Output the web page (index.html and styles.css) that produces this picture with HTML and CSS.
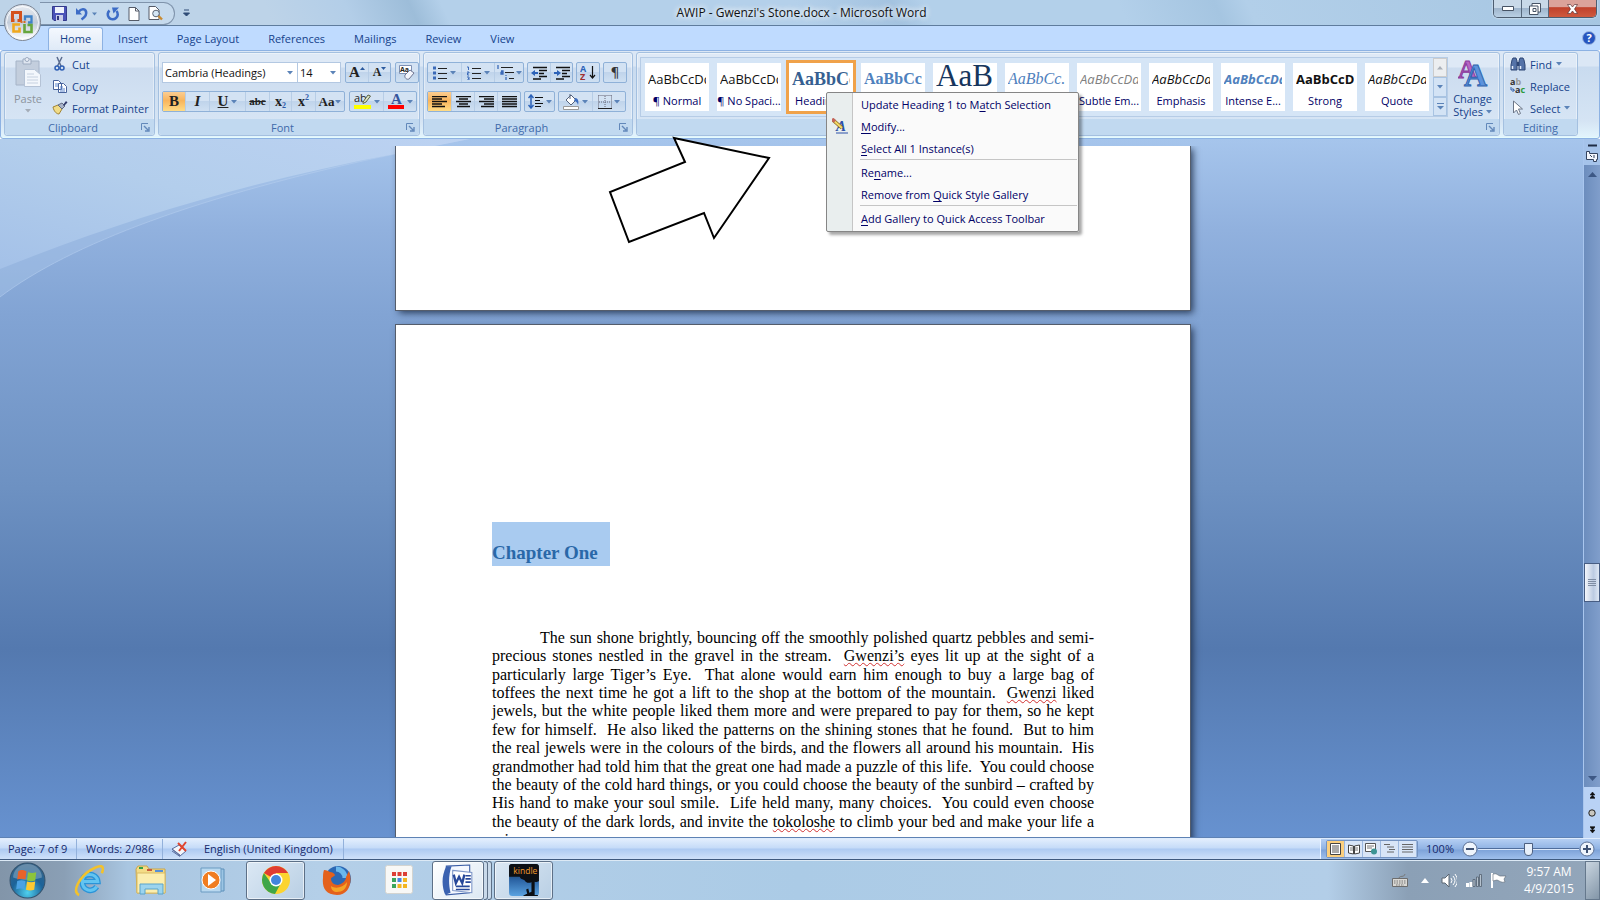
FILE: index.html
```html
<!DOCTYPE html>
<html lang="en">
<head>
<meta charset="utf-8">
<title>AWIP - Gwenzi's Stone.docx - Microsoft Word</title>
<link rel="stylesheet" href="styles.css">
</head>
<body>
<svg class="defs" aria-hidden="true">
  <defs>
    <symbol id="down" viewBox="0 0 6 4"><path d="M0 0h6L3 3.5z" fill="#5b83b8"/></symbol>
    <symbol id="launch" viewBox="0 0 9 9"><path d="M.5 7V.5H7" fill="none" stroke="#6288ba"/><path d="M3 3l4 4M8 4v4H4" fill="none" stroke="#6288ba" stroke-width="1.4"/></symbol>
    <linearGradient id="orb" x1="0" y1="0" x2="0" y2="1"><stop offset="0" stop-color="#e9edf3"/><stop offset=".5" stop-color="#c3ccda"/><stop offset="1" stop-color="#fff"/></linearGradient>
    <radialGradient id="startorb" cx=".5" cy=".85" r=".9"><stop offset="0" stop-color="#4fd0ee"/><stop offset=".5" stop-color="#1c6399"/><stop offset="1" stop-color="#3c6688"/></radialGradient>
    <linearGradient id="kindlebg" x1="0" y1="0" x2="0" y2="1"><stop offset="0" stop-color="#0b1c30"/><stop offset=".5" stop-color="#2b63a4"/><stop offset="1" stop-color="#5aa2e0"/></linearGradient>
  </defs>
</svg>
<div class="window">
  <header class="titlebar">
    <div class="quick">
      <button aria-label="Save"><svg width="15" height="15" viewBox="0 0 15 15"><path d="M.5.5h14v14H2L.5 13z" fill="#4a52b8" stroke="#343a8c"/><path d="M3 1h9v6H3z" fill="#eef2fc"/><path d="M4 9h7v6H4z" fill="#c9cde8"/><path d="M5 10h2v4H5z" fill="#30367c"/></svg></button>
      <button class="undo" aria-label="Undo"><svg width="23" height="14" viewBox="0 0 23 14"><path d="M1 1v6.500h6z" fill="#3d6cc6"/><path d="M3.500 5C6 1.500 10 1.500 11 4.500S9.500 10.500 6.500 12.500" fill="none" stroke="#3d6cc6" stroke-width="2.600"/><path d="M17 5.500h5l-2.500 3z" fill="#5b83b8"/></svg></button>
      <button aria-label="Repeat"><svg width="14" height="14" viewBox="0 0 14 14"><path d="M3.500 3.500A5 5 0 1 0 10.500 4" fill="none" stroke="#3d6cc6" stroke-width="2.600"/><path d="M6 .5h7L7.500 6.500z" fill="#3d6cc6"/></svg></button>
      <button aria-label="New"><svg width="12" height="14" viewBox="0 0 12 14"><path d="M1 .5h6.500l3.500 3.500v9.500H1z" fill="#fff" stroke="#555b68"/><path d="M7.500.5V4H11" fill="none" stroke="#555b68"/></svg></button>
      <button aria-label="Print preview"><svg width="15" height="15" viewBox="0 0 15 15"><path d="M1 .5h6.500l3.500 3.500v9.500H1z" fill="#fff" stroke="#555b68"/><circle cx="8" cy="7.500" r="3.300" fill="#d4e6f5" stroke="#5b6675"/><path d="M10.500 10l3.500 3.500" stroke="#c98b32" stroke-width="2.400"/></svg></button>
    </div>
    <button class="customize" aria-label="Customize Quick Access Toolbar"><svg width="7" height="8" viewBox="0 0 7 8"><path d="M1 1h5M.5 4h6l-3 3z" stroke="#2e4b76" stroke-width="1" fill="#2e4b76"/></svg></button>
    <h1 class="title">AWIP - Gwenzi's Stone.docx - Microsoft Word</h1>
    <div class="controls">
      <button class="min" aria-label="Minimize"><svg width="12" height="5"><path d="M.5.500h11v4H.5z" fill="#fff" stroke="#475364"/></svg></button>
      <button class="max" aria-label="Restore"><svg width="12" height="12" viewBox="0 0 12 12"><path d="M3 .5h8.500V9H9v2.500H.5V3H3z" fill="#fff" stroke="#475364"/><path d="M4 5.500h3v3H4zM3 3h6v6" fill="none" stroke="#475364"/></svg></button>
      <button class="close" aria-label="Close"><svg width="11" height="10" viewBox="0 0 11 10"><path d="M.5.5h3l2 2.500 2-2.500h3L7.500 5l3 4.500h-3l-2-2.500-2 2.500h-3l3-4.500z" fill="#fff" stroke="#5c3438" stroke-width=".7"/></svg></button>
    </div>
    <button class="office" aria-label="Office Button"><svg width="37" height="37" viewBox="0 0 37 37"><circle cx="18.500" cy="18.500" r="18" fill="url(#orb)" stroke="#7a8493"/><circle cx="18.500" cy="18.500" r="16" fill="none" stroke="#fff" stroke-opacity=".8"/><g fill="none" stroke-width="3"><path d="M10.500 16.500H8.500v-8h8v8h-3" stroke="#d4511c"/><path d="M21 16.500v-4h6.500v6H24" stroke="#3f82c8" stroke-width="2.300"/><path d="M16 20.500H9.500v7h6v-4" stroke="#f0a81e" stroke-width="2.600"/><path d="M20.500 20v8h7v-7h-4" stroke="#67a63e" stroke-width="2.600"/></g><path d="M16.500 17h2v2h-2zM19.500 17h2v2h-2z" fill="#d86a25"/></svg></button>
  </header>

  <nav class="tabs" role="tablist">
    <button class="tab on" role="tab" aria-selected="true">Home</button>
    <button class="tab" role="tab">Insert</button>
    <button class="tab" role="tab">Page Layout</button>
    <button class="tab" role="tab">References</button>
    <button class="tab" role="tab">Mailings</button>
    <button class="tab" role="tab">Review</button>
    <button class="tab" role="tab">View</button>
    <button class="help" aria-label="Help">?</button>
  </nav>

  <div class="ribbon">
    <section class="group clipboard">
      <div class="body">
        <button class="big paste" disabled><svg width="27" height="30" viewBox="0 0 27 30"><path d="M1 4h23v24H1z" fill="#c3cedd" stroke="#a6b4c8"/><path d="M8 2h8v5H8z" fill="#dfe6f0" stroke="#9dabc0"/><circle cx="12" cy="2.500" r="2" fill="#e9eef6" stroke="#9dabc0"/><path d="M9.500 12.500h10l6 5v12h-16z" fill="#f3f7fc" stroke="#b5c3d6"/><path d="M12 17h7M12 20h11M12 23h11M12 26h11" stroke="#c6d1e0"/></svg><span>Paste</span><svg width="6" height="4"><path d="M0 0h6L3 3.500z" fill="#a5adb8"/></svg></button>
        <div class="stack">
          <button><svg width="16" height="16" viewBox="0 0 16 16"><path d="M5 1l4 9M10 1L5.500 10" stroke="#5a6c90" stroke-width="1.500" fill="none"/><circle cx="5" cy="12" r="2" fill="none" stroke="#2e5fb4" stroke-width="1.500"/><circle cx="10" cy="12" r="2" fill="none" stroke="#2e5fb4" stroke-width="1.500"/></svg><span>Cut</span></button>
          <button><svg width="16" height="16" viewBox="0 0 16 16"><path d="M1.500 2.500h5l3 3v6h-8zM6.500 5.500h5l3 3v6h-8z" fill="#fff" stroke="#47639c"/><path d="M3 6h3M3 8h3M8 9h3M8 11h5M8 13h5" stroke="#5d86cd"/></svg><span>Copy</span></button>
          <button><svg width="16" height="16" viewBox="0 0 16 16"><path d="M1 7l5-2 4 4-3 5c-2 0-5-2-6-7z" fill="#f1dc87" stroke="#a18434"/><path d="M6 5l4-2 3 3-3 3z" fill="#a9b4c9" stroke="#616b84"/><path d="M11 5l3-4 1.500 1.500L12 6z" fill="#303a6a"/></svg><span>Format Painter</span></button>
        </div>
      </div>
      <footer><h2>Clipboard</h2><button aria-label="Clipboard options"><svg width="9" height="9"><use href="#launch"/></svg></button></footer>
    </section>

    <section class="group font">
      <div class="body rows">
        <div class="row">
          <div class="combos">
            <span class="combo face"><select aria-label="Font"><option>Cambria (Headings)</option></select><svg width="6" height="4"><use href="#down"/></svg></span>
            <span class="combo size"><select aria-label="Font size"><option>14</option></select><svg width="6" height="4"><use href="#down"/></svg></span>
          </div>
          <div class="set">
            <button class="w22 serif grow" aria-label="Grow font">A<svg width="5" height="3"><path d="M0 3h5L2.500 0z" fill="#2c5a9e"/></svg></button>
            <button class="w22 serif shrink" aria-label="Shrink font">A<svg width="5" height="3"><path d="M0 0h5L2.500 3z" fill="#2c5a9e"/></svg></button>
          </div>
          <div class="set"><button class="w22" aria-label="Clear formatting"><svg width="18" height="17" viewBox="0 0 18 17"><path d="M1.500 1.500h12v8h-12z" fill="#fff" stroke="#7e90b4"/><text x="2" y="8" class="tiny">Aa</text><path d="M7 11l5-5 4 3-5 6c-2 1-5-1-4-4z" fill="#f3f5fc" stroke="#6f7692"/></svg></button></div>
        </div>
        <div class="row">
          <div class="set">
            <button class="w22 serif on" aria-label="Bold"><b>B</b></button>
            <button class="w24 serif" aria-label="Italic"><i>I</i></button>
            <button class="w36 serif" aria-label="Underline"><u>U</u><svg width="6" height="4"><use href="#down"/></svg></button>
            <button class="w24 serif strike" aria-label="Strikethrough"><s>abc</s></button>
            <button class="w22 serif script" aria-label="Subscript">x<sub>2</sub></button>
            <button class="w24 serif script" aria-label="Superscript">x<sup>2</sup></button>
            <button class="w29 serif case" aria-label="Change case">Aa<svg width="6" height="4"><use href="#down"/></svg></button>
          </div>
          <div class="set">
            <button class="w33" aria-label="Highlight"><svg width="18" height="17" viewBox="0 0 18 17"><text x="0" y="9" class="abc">ab</text><path d="M9 9l5-7 2.500 1-4.500 6-3 1.500z" fill="#dce5c5" stroke="#5a6245"/><path d="M0 12h17v4H0z" fill="#ff0"/></svg><svg width="6" height="4"><use href="#down"/></svg></button>
            <button class="w33" aria-label="Font color"><svg width="17" height="17" viewBox="0 0 17 17"><text x="3" y="11" class="colorA">A</text><path d="M0 12h16v4H0z" fill="#f00"/></svg><svg width="6" height="4"><use href="#down"/></svg></button>
          </div>
        </div>
      </div>
      <footer><h2>Font</h2><button aria-label="Font options"><svg width="9" height="9"><use href="#launch"/></svg></button></footer>
    </section>

    <section class="group paragraph">
      <div class="body rows">
        <div class="row">
          <div class="set">
            <button class="w34" aria-label="Bullets"><svg width="14" height="14"><path d="M0 2h3M0 7h3M0 12h3" stroke="#3b6ab8" stroke-width="3"/><path d="M5 2.500h9M5 7.500h9M5 12.500h9" stroke="#222"/></svg><svg width="6" height="4"><use href="#down"/></svg></button>
            <button class="w34" aria-label="Numbering"><svg width="14" height="14"><path d="M0 1h1.500v3M0 6h2v1H.5v2H2M0 11h2v3H0M1 12.500h1" stroke="#3b6ab8" fill="none"/><path d="M5 2.500h9M5 7.500h9M5 12.500h9" stroke="#222"/></svg><svg width="6" height="4"><use href="#down"/></svg></button>
            <button class="w29" aria-label="Multilevel list"><svg width="17" height="15"><path d="M1 0v4M4 6h2v3H4V7.500h2M9 10v1M9 12v3" stroke="#3b6ab8" fill="none" stroke-width="1.300"/><path d="M4 2.500h12M8 7.500h9M12 13.500h5" stroke="#222"/></svg><svg width="6" height="4"><use href="#down"/></svg></button>
          </div>
          <div class="set">
            <button class="w22" aria-label="Decrease indent"><svg width="16" height="14"><path d="M2 1.500h14M8 4.500h8M8 7.500h5M8 10.500h8M2 13h8" stroke="#111" stroke-width="1.600"/><path d="M0 7l4-3v2h3v2H4v2z" fill="#2c62b8"/></svg></button>
            <button class="w22" aria-label="Increase indent"><svg width="16" height="14"><path d="M2 1.500h14M8 4.500h8M8 7.500h5M8 10.500h8M2 13h8" stroke="#111" stroke-width="1.600"/><path d="M7 7L3 4v2H0v2h3v2z" fill="#2c62b8"/></svg></button>
          </div>
          <div class="set"><button class="w22" aria-label="Sort"><svg width="17" height="17" viewBox="0 0 17 17"><text x="0" y="8" class="sortA">A</text><text x="0" y="16" class="sortZ">Z</text><path d="M12.500 2v12M10 11l2.500 3 2.500-3" fill="none" stroke="#111" stroke-width="1.200"/></svg></button></div>
          <div class="set"><button class="w22 pilcrow" aria-label="Show marks">¶</button></div>
        </div>
        <div class="row">
          <div class="set">
            <button class="w23 on" aria-label="Align left"><svg width="15" height="12"><path d="M0 .5h15M0 3h10M0 5.500h15M0 8h10M0 10.500h13" stroke="#111" stroke-width="1.300"/></svg></button>
            <button class="w23" aria-label="Center"><svg width="15" height="12"><path d="M0 .5h15M3 3h9M0 5.500h15M3 8h9M1 10.500h13" stroke="#111" stroke-width="1.300"/></svg></button>
            <button class="w23" aria-label="Align right"><svg width="15" height="12"><path d="M0 .5h15M5 3h10M0 5.500h15M5 8h10M2 10.500h13" stroke="#111" stroke-width="1.300"/></svg></button>
            <button class="w23" aria-label="Justify"><svg width="15" height="12"><path d="M0 .5h15M0 3h15M0 5.500h15M0 8h15M0 10.500h15" stroke="#111" stroke-width="1.300"/></svg></button>
          </div>
          <div class="set"><button class="w29" aria-label="Line spacing"><svg width="16" height="15"><path d="M3 1v13M.5 4L3 1l2.500 3M.5 11L3 14l2.500-3" fill="none" stroke="#2c62b8" stroke-width="1.500"/><path d="M7 3.500h8M7 6.500h5M7 9.500h8M7 12.500h6" stroke="#111" stroke-width="1.200"/></svg><svg width="6" height="4"><use href="#down"/></svg></button></div>
          <div class="set">
            <button class="w33" aria-label="Shading"><svg width="17" height="16"><path d="M3 6l5-5 5 5-5 5z" fill="#fff" stroke="#54627c"/><path d="M7 0v5" stroke="#54627c"/><path d="M12 4c3 0 4 3 3 7-1-3-2-4-4-4z" fill="#3a6cc0"/><path d="M.5 12.500h15v3H.5z" fill="#fff" stroke="#999"/></svg><svg width="6" height="4"><use href="#down"/></svg></button>
            <button class="w33" aria-label="Borders"><svg width="14" height="14"><path d="M.5.5v13M13.500.5v13M.5.5h13M7 1v12M1 7h12" fill="none" stroke="#667" stroke-dasharray="1 1"/><path d="M0 13.500h14" stroke="#222"/></svg><svg width="6" height="4"><use href="#down"/></svg></button>
          </div>
        </div>
      </div>
      <footer><h2>Paragraph</h2><button aria-label="Paragraph options"><svg width="9" height="9"><use href="#launch"/></svg></button></footer>
    </section>

    <section class="group styles">
      <div class="body">
        <div class="gallery">
          <div class="cards">
            <button class="card"><span class="demo">AaBbCcDd</span><span class="name">¶ Normal</span></button>
            <button class="card"><span class="demo">AaBbCcDd</span><span class="name">¶ No Spaci...</span></button>
            <button class="card picked"><span class="demo h1s">AaBbCc</span><span class="name">Heading 1</span></button>
            <button class="card"><span class="demo h2s">AaBbCc</span><span class="name">Heading 2</span></button>
            <button class="card"><span class="demo titles">AaB</span><span class="name">Title</span></button>
            <button class="card"><span class="demo subs">AaBbCc.</span><span class="name">Subtitle</span></button>
            <button class="card"><span class="demo subtle">AaBbCcDd</span><span class="name">Subtle Em...</span></button>
            <button class="card"><span class="demo em">AaBbCcDd</span><span class="name">Emphasis</span></button>
            <button class="card"><span class="demo intense">AaBbCcDd</span><span class="name">Intense E...</span></button>
            <button class="card"><span class="demo strong">AaBbCcDd</span><span class="name">Strong</span></button>
            <button class="card"><span class="demo em">AaBbCcDd</span><span class="name">Quote</span></button>
          </div>
          <div class="pager">
            <button class="off" aria-label="Row up"><svg width="6" height="4"><path d="M0 3.500h6L3 0z" fill="#aab0b8"/></svg></button>
            <button aria-label="Row down"><svg width="6" height="4"><use href="#down"/></svg></button>
            <button aria-label="More"><svg width="7" height="7"><path d="M0 .5h7" stroke="#5b83b8"/><path d="M0 3h7L3.500 6.500z" fill="#5b83b8"/></svg></button>
          </div>
          <div class="menu" role="menu">
            <button role="menuitem"><span>Update Heading 1 to M<u>a</u>tch Selection</span></button>
            <button role="menuitem"><svg width="17" height="16" viewBox="0 0 17 16"><text x="4" y="13" class="modA">A</text><path d="M4 15h12" stroke="#2c50a8"/><path d="M1 2l9 8" stroke="#8a6a20" stroke-width="3.600"/><path d="M1 2l9 8" stroke="#f3d868" stroke-width="2.200"/><path d="M0 1l3 2.500" stroke="#c4655a" stroke-width="3.500"/></svg><span><u>M</u>odify...</span></button>
            <button role="menuitem"><span><u>S</u>elect All 1 Instance(s)</span></button>
            <hr>
            <button role="menuitem"><span>Re<u>n</u>ame...</span></button>
            <button role="menuitem"><span>Remove from <u>Q</u>uick Style Gallery</span></button>
            <hr>
            <button role="menuitem"><span><u>A</u>dd Gallery to Quick Access Toolbar</span></button>
          </div>
        </div>
        <button class="big change"><svg width="30" height="29" viewBox="0 0 30 29"><text x="0" y="19" class="chA">A</text><text x="6" y="27" class="chB">A</text></svg><span>Change<br>Styles <svg width="6" height="4"><use href="#down"/></svg></span></button>
      </div>
      <footer><h2></h2><button aria-label="Styles options"><svg width="9" height="9"><use href="#launch"/></svg></button></footer>
    </section>

    <section class="group editing">
      <div class="body">
        <div class="stack">
          <button><svg width="16" height="15" viewBox="0 0 16 15"><path d="M2 3l1-2h3l1 3v9H1V8zM14 3l-1-2h-3L9 4v9h6V8z" fill="#5573a8" stroke="#2e4675"/><path d="M7 5h2v4H7z" fill="#2e4675"/><path d="M2.500 9v3M10.500 9v3" stroke="#e6eefb" stroke-width="1.500"/></svg><span>Find</span><svg width="6" height="4"><use href="#down"/></svg></button>
          <button><svg width="16" height="16" viewBox="0 0 16 16"><text x="0" y="7" class="rab">a<tspan fill="#999">b</tspan></text><text x="5" y="15" class="rab">a<tspan fill="#2c9a3a">c</tspan></text><path d="M1 9v3h3M2.500 10.500l2 1.500-2 2" fill="none" stroke="#2c5aa8"/></svg><span>Replace</span></button>
          <button><svg width="16" height="16" viewBox="0 0 16 16"><path d="M3.500 1v12l3-3 2 4.500 2-1-2-4.500h4z" fill="#fff" stroke="#6b7688"/></svg><span>Select</span><svg width="6" height="4"><use href="#down"/></svg></button>
        </div>
      </div>
      <footer><h2>Editing</h2></footer>
    </section>
  </div>

  <main class="workspace">
    <svg class="swoosh" width="480" height="200" viewBox="0 0 480 200"><defs><linearGradient id="sw" x1="0" y1="1" x2="1" y2="0"><stop offset="0" stop-color="#a4c1e8"/><stop offset=".5" stop-color="#b3ceec"/><stop offset="1" stop-color="#bcd2f2"/></linearGradient></defs><path d="M0 158C70 105 200 56 395 15L470 0H0z" fill="#a9c5e9" fill-opacity=".45"/><path d="M0 158C70 105 200 56 395 15" fill="none" stroke="#b4cdee" stroke-opacity=".6"/><path d="M0 130C120 82 250 42 395 15L470 0H0z" fill="url(#sw)"/></svg>
    <div class="canvas">
      <article class="page first"></article>
      <article class="page second">
        <h2 class="chapter">Chapter One</h2>
        <div class="para">
          <p class="indent">The sun shone brightly, bouncing off the smoothly polished quartz pebbles and semi-</p>
          <p>precious stones nestled in the gravel in the stream.&nbsp; <span class="sp">Gwenzi’s</span> eyes lit up at the sight of a</p>
          <p>particularly large Tiger’s Eye.&nbsp; That alone would earn him enough to buy a large bag of</p>
          <p>toffees the next time he got a lift to the shop at the bottom of the mountain.&nbsp; <span class="sp">Gwenzi</span> liked</p>
          <p>jewels, but the white people liked them more and were prepared to pay for them, so he kept</p>
          <p>few for himself.&nbsp; He also liked the patterns on the shining stones that he found.&nbsp; But to him</p>
          <p>the real jewels were in the colours of the birds, and the flowers all around his mountain.&nbsp; His</p>
          <p>grandmother had told him that the great one had made a puzzle of this life.&nbsp; You could choose</p>
          <p>the beauty of the cold hard things, or you could choose the beauty of the sunbird – crafted by</p>
          <p>His hand to make your soul smile.&nbsp; Life held many, many choices.&nbsp; You could even choose</p>
          <p>the beauty of the dark lords, and invite the <span class="sp">tokoloshe</span> to climb your bed and make your life a</p>
          <p class="last">misery.</p>
        </div>
      </article>
    </div>
    <svg class="arrow" width="164" height="110" viewBox="0 0 164 110"><path d="M66 2l95 20-55 80-10-25-75 29L2 56l75-30z" fill="#fff" stroke="#000" stroke-width="2"/></svg>
    <aside class="scroll">
      <button class="ruler" aria-label="Split and ruler"><svg width="14" height="18" viewBox="0 0 14 18"><path d="M3 1.500h9" stroke="#1f2c44" stroke-width="2"/><path d="M1.500 7.500h3v2h8v6h-1v2h-3v-2h-7z" fill="#f3f6fc" stroke="#34435e"/><path d="M5 11l2 2M9 11v3" stroke="#34435e"/></svg></button>
      <div class="track">
        <button aria-label="Scroll up"><svg width="9" height="5"><path d="M0 5h9L4.500 0z" fill="#3d5885"/></svg></button>
        <div class="lane"><div class="thumb"><svg width="8" height="8"><path d="M0 .5h8M0 2.500h8M0 4.500h8M0 6.500h8" stroke="#7f8da4"/></svg></div></div>
        <button aria-label="Scroll down"><svg width="9" height="5"><path d="M0 0h9L4.500 5z" fill="#3d5885"/></svg></button>
      </div>
      <div class="browse">
        <button aria-label="Previous page"><svg width="5" height="7"><path d="M0 3h5L2.500 0zM0 6h5L2.500 3zM0 6.500h5" fill="#111" stroke="#111" stroke-width=".5"/></svg></button>
        <button aria-label="Browse object"><svg width="8" height="8"><circle cx="4" cy="4" r="3.200" fill="#c9c7c0" stroke="#222"/></svg></button>
        <button aria-label="Next page"><svg width="5" height="7"><path d="M0 .5h5M0 1h5L2.500 4zM0 4h5L2.500 7z" fill="#111" stroke="#111" stroke-width=".5"/></svg></button>
      </div>
    </aside>
  </main>

  <footer class="status">
    <span class="cell pg">Page: 7 of 9</span>
    <span class="cell wd">Words: 2/986</span>
    <span class="cell lang"><svg width="17" height="16" viewBox="0 0 17 16"><path d="M1 8l7-4 7 6-6 5z" fill="#f4f6fb" stroke="#5a6c9c"/><path d="M1 8l8 6M1 10l8 5.500" stroke="#5a6c9c" fill="none"/><path d="M7 2l8 8M15 1L8 10" stroke="#e0442e" stroke-width="2"/></svg>English (United Kingdom)</span>
    <div class="right">
      <div class="views">
        <button class="on" aria-label="Print layout"><svg width="11" height="12"><path d="M.5.5h10v11H.5z" fill="#fff" stroke="#444"/><path d="M2 3h7M2 5h7M2 7h7M2 9h7" stroke="#555"/></svg></button>
        <button aria-label="Full screen reading"><svg width="12" height="11"><path d="M.5 1l5 1v8l-5-1zM11.500 1l-5 1v8l5-1z" fill="#fff" stroke="#444"/><path d="M2 4h3M2 6h3M7 4h3M7 6h3" stroke="#777"/></svg></button>
        <button aria-label="Web layout"><svg width="13" height="12"><path d="M.5.5h10v8H.5z" fill="#fff" stroke="#555"/><path d="M2 3h7M2 5h5" stroke="#777"/><circle cx="9" cy="8.500" r="3" fill="#3c9494"/></svg></button>
        <button aria-label="Outline"><svg width="11" height="10"><path d="M0 .5h6M3 3h7M5 5.500h6M3 8h7" stroke="#666"/></svg></button>
        <button aria-label="Draft"><svg width="11" height="10"><path d="M0 .5h11M0 3h11M0 5.500h11M0 8h11" stroke="#666"/></svg></button>
      </div>
      <span class="pct">100%</span>
      <button class="zoom" aria-label="Zoom out"><svg width="16" height="16"><circle cx="8" cy="8" r="7" fill="#eef4fc" stroke="#5a6f94"/><path d="M4 8h8" stroke="#3f5274" stroke-width="2"/></svg></button>
      <input type="range" class="slider" min="0" max="100" value="50" aria-label="Zoom">
      <button class="zoom" aria-label="Zoom in"><svg width="16" height="16"><circle cx="8" cy="8" r="7" fill="#eef4fc" stroke="#5a6f94"/><path d="M4 8h8M8 4v8" stroke="#3f5274" stroke-width="2"/></svg></button>
    </div>
  </footer>

  <footer class="taskbar">
    <button class="start" aria-label="Start"><svg width="37" height="37" viewBox="0 0 36 36"><circle cx="18" cy="18" r="17" fill="url(#startorb)" stroke="#34536e"/><path d="M4 15a14 13 0 0 1 28 0c-8 3-20 3-28 0z" fill="#fff" fill-opacity=".25"/><path d="M9 9c3-2 5-1 8 0l-1 8c-3-1-5-1-8 0z" fill="#e9632a"/><path d="M18.500 10c3 1 5 1 8 0l-1 8c-3 1-5 1-8 0z" fill="#8cc43c"/><path d="M8 18.500c3-1 5-1 8 0l-1 8c-3-1-5-1-8 0z" fill="#4ba2e4"/><path d="M17.500 19c3 1 5 1 8 0l-1 8c-3 1-5 1-8 0z" fill="#fbc931"/></svg></button>
    <button class="app" aria-label="Internet Explorer"><svg width="31" height="33" viewBox="0 0 30 32"><path d="M22 22c-4 6-14 4-14-5S22 8 23 17H8" fill="none" stroke="#2a94d8" stroke-width="5.500"/><path d="M22 22c-4 6-14 4-14-5S22 8 23 17H8" fill="none" stroke="#62c4f1" stroke-width="3"/><path d="M5 30C-3 27 6 12 16 6S30 1 27 9" fill="none" stroke="#f3c22b" stroke-width="2.500"/></svg></button>
    <button class="app" aria-label="Explorer"><svg width="32" height="32" viewBox="0 0 32 32"><path d="M1 5l2-3h9l2 3h16v24H2z" fill="#f4dc86" stroke="#c9a54a"/><path d="M4 3h4v2H4z" fill="#35a045"/><path d="M12 5h5v2h-5z" fill="#c85a3c"/><path d="M20 6h8v2h-8z" fill="#5590d8"/><path d="M2 9h28v20H2z" fill="#fbeeaf" stroke="#d9bc66"/><path d="M5 30V20h23v10h-5v-5H10v5z" fill="#9cd4ee" stroke="#5ba4ca"/></svg></button>
    <button class="app" aria-label="Media Player"><svg width="28" height="28" viewBox="0 0 28 28"><path d="M8 3h17v22H8z" fill="#9cc5e4" stroke="#5d90ba"/><path d="M2 2h20v24H2z" fill="#b9d8ef" stroke="#6a9bc2"/><circle cx="12" cy="14" r="9" fill="#f07d21" stroke="#fff"/><path d="M9 8v12l8-6z" fill="#fff"/></svg></button>
    <button class="app box" aria-label="Chrome"><svg width="30" height="30" viewBox="0 0 30 30"><circle cx="15" cy="15" r="14" fill="#fcd430"/><path d="M15 15L2.900 8A14 14 0 0 1 27.100 8H15z" fill="#e03c31"/><path d="M2.900 8A14 14 0 0 0 14 29l6-11-5-3-5 3z" fill="#3fa648"/><circle cx="15" cy="15" r="6.500" fill="#fff"/><circle cx="15" cy="15" r="5" fill="#4285dc"/></svg></button>
    <button class="app" aria-label="Firefox"><svg width="30" height="31" viewBox="0 0 30 31"><circle cx="16" cy="14" r="13" fill="#2c68b4"/><path d="M14 4c5 0 9 4 9 9" stroke="#6bb8ec" stroke-width="5" fill="none"/><path d="M2 5c3 0 4 1 6 2 2 0 4 1 5 3-1 2-4 2-4 4 0 3 3 6 7 6 4-1 8-4 8-8l3-6c4 11 0 24-12 24S0 22 1 13c0-3 0-5 1-8z" fill="#e4611c"/><path d="M9 21c4 3 12 2 16-4 0 7-5 10-10 10-3 0-6-2-6-6z" fill="#f5a427"/></svg></button>
    <button class="app" aria-label="App launcher"><svg width="28" height="30" viewBox="0 0 28 30"><rect x=".5" y=".5" width="27" height="28" rx="2" fill="#f8f8f6" stroke="#d4d4d0"/><path d="M7 7h4v4H7zM12.500 7h4v4h-4zM18 7h4v4h-4z" fill="#dc3f35"/><path d="M7 13h4v4H7z" fill="#3ba55a"/><path d="M12.500 13h4v4h-4z" fill="#4485e0"/><path d="M18 13h4v4h-4z" fill="#f2b520"/><path d="M7 19h4v4H7z" fill="#3ba55a"/><path d="M12.500 19h4v4h-4zM18 19h4v4h-4z" fill="#f2b520"/></svg></button>
    <div class="pile"><button class="app box word" aria-label="Word"><svg width="32" height="33" viewBox="0 0 30 31"><path d="M4 2l22-1v26l-22 2z" fill="#f4f8ff" stroke="#3a5da6"/><path d="M4 2C-1 12 0 22 3 29l5-2C6 19 6 10 9 2z" fill="#3b62b0"/><path d="M10 6l18 2v19l-18-2z" fill="#fff" stroke="#7d96c8"/><path d="M11 10l2 8 3-6 3 6 2-8" fill="none" stroke="#27489a" stroke-width="2.200"/><path d="M22 11h5M22 14h5M22 17h5M13 21h13M13 24h13" stroke="#27489a" stroke-width="1.500"/></svg></button><i></i><i></i></div>
    <button class="app box" aria-label="Kindle"><svg width="30" height="32" viewBox="0 0 28 30"><rect width="28" height="30" rx="3" fill="url(#kindlebg)"/><path d="M0 3q0-3 3-3h22q3 0 3 3v13c-3 2-5 0-7 1s-5 1-6-1-4-1-5-4H0z" fill="#0c0f14"/><path d="M21 14h3v15h3v1H13c2-1 3-2 4-2l-1-4 2-1 1 4 2-1z" fill="#0c0f14"/><text x="4" y="9" class="kin">kindle</text></svg></button>
    <div class="tray">
      <svg width="16" height="14"><path d="M.5 5.500h15v8H.5z" fill="#d9d8d4" stroke="#6d6d6d"/><path d="M2 8h12M2 10h12M4 12h8" stroke="#777" stroke-dasharray="1.500 1"/><path d="M7 5c1-3 5 0 6-4" stroke="#777" fill="none"/></svg>
      <svg width="8" height="5"><path d="M0 5h8L4 0z" fill="#fff"/></svg>
      <svg width="16" height="15"><path d="M1 5h3l4-4v13l-4-4H1z" fill="#fff" stroke="#5b6672"/><path d="M10 5q2 2.500 0 5M12 3q4 4.500 0 9M14 1q5 6.500 0 13" fill="none" stroke="#fff"/></svg>
      <svg width="16" height="13"><path d="M0 9h3v4H0zM3.500 8h3v5h-3z" fill="#fff"/><path d="M7 5.500h2v7H7zM10.500 3h2v9.500h-2zM13.500.5h2v12h-2z" fill="#b6c2ce" stroke="#53616f" stroke-width=".8"/></svg>
      <svg width="16" height="15"><path d="M1 0v15" stroke="#fff" stroke-width="2"/><path d="M2 1c4-1 4 1 7 2h6l-2 3 1 3c-4 1-5-1-8-2l-4 1z" fill="#fff" stroke="#5b6672" stroke-width=".6"/></svg>
    </div>
    <time class="clock">9:57 AM<br>4/9/2015</time>
    <button class="peek" aria-label="Show desktop"></button>
  </footer>
</div>
</body>
</html>
```

FILE: styles.css
```css
* { box-sizing: border-box; }
body { margin: 0; font-family: "Open Sans", "Noto Sans", sans-serif; font-size: 11px; color: #15428b; overflow: hidden; }
button { font: inherit; color: inherit; background: none; border: 0; padding: 0; margin: 0; }
h1, h2, p { margin: 0; font-weight: 400; }
svg { display: block; flex: none; }
.defs { position: absolute; width: 0; height: 0; }
.window { display: flex; flex-direction: column; height: 100vh; }

/* title bar */
.titlebar { position: relative; z-index: 3; display: flex; align-items: center; height: 26px; padding-left: 40px; border-bottom: 1px solid #5f7c9d; background: linear-gradient(65deg, #bdd3e8 0 17%, #b3cee8 22%, #9dbdd9 26%, #b4d0ea 28% 50%, #a4c3e0 56%, #b3d0ea 58% 70%, #a5c5e1 76%, #b2cfe9 78%, #a6c6e2); }
.quick { display: flex; align-items: center; gap: 8px; height: 23px; margin-top: 2px; padding: 0 11px 0 12px; border: 1px solid #7f93ab; border-left: 0; border-radius: 0 12px 12px 0; background: #c6daed; }
.customize { width: 22px; display: grid; place-items: center; }
.title { flex: 1; text-align: center; font-size: 12px; color: #111; text-shadow: 0 0 6px #fff, 0 0 6px #fff; padding-right: 87px; }
.controls { display: flex; align-self: flex-start; margin-right: 3px; height: 18px; border: 1px solid #4d5d70; border-top: 0; border-radius: 0 0 5px 5px; overflow: hidden; box-shadow: 0 0 2px #fff; }
.controls button { display: grid; place-items: center; width: 27px; border-right: 1px solid #56677b; background: linear-gradient(#c9d9e8 50%, #9fb5cc 50%, #bad0e4); }
.controls .min { width: 28px; }
.controls .close { width: 47px; border: 0; background: linear-gradient(#dba29a 40%, #c0412c 45%, #cf5a3f); }
.office { position: absolute; left: 4px; top: 4px; }

/* tabs */
.tabs { display: flex; align-items: flex-end; gap: 1px; height: 24px; padding-left: 48px; background: #bfdbff; }
.tab { height: 22px; padding: 0 14px; border-radius: 3px 3px 0 0; font-size: 11px; line-height: 22px; }
.tab.on { padding: 0 11px; border: 1px solid #8db2e3; border-bottom: 0; background: linear-gradient(#f4f8fe, #dfeaf7); height: 23px; }
.help { margin: 0 4px 5px auto; width: 14px; height: 14px; border-radius: 50%; border: 1px solid #9eb6de; background: #2655c0; color: #fff; font-weight: 700; line-height: 12px; }

/* ribbon */
.ribbon { position: relative; z-index: 2; display: flex; gap: 3px; height: 89px; padding: 1px 21px 2px 3px; border: 1px solid #8db2e3; border-radius: 3px; background: linear-gradient(#dbe7f5 0 15px, #c9dbef 16px, #d5e4f4 70px, #e3f5fd); box-shadow: inset 0 -1px #e4fbfd; }
.group { display: flex; flex-direction: column; border: 1px solid #a4c0e0; border-radius: 3px; background: linear-gradient(#dee9f6 0 14px, #ccdcef 15px, #d9e7f6); box-shadow: inset 0 0 0 1px rgba(255,255,255,.4); }
.body { flex: 1; display: flex; }
.group footer { display: flex; align-items: center; height: 16px; background: #c1d9f0; border-radius: 0 0 3px 3px; color: #3e6aaa; }
.group footer h2 { flex: 1; text-align: center; font-size: 11px; line-height: 15px; }
.group footer button { margin-right: 4px; }
.clipboard { width: 151px; }
.font { width: 262px; }
.paragraph { width: 210px; }
.styles { flex: 1; min-width: 0; }
.editing { width: 75px; }
.big { display: flex; flex-direction: column; align-items: center; }
.paste { width: 46px; padding-top: 4px; color: #8d949e; }
.paste span { padding: 4px 0 3px; line-height: 15px; }
.stack { display: flex; flex-direction: column; padding-left: 1px; }
.stack button { display: flex; align-items: center; gap: 4px; height: 22px; white-space: nowrap; }
.editing .stack { padding-left: 6px; }
.rows { flex-direction: column; gap: 8px; padding: 9px 3px 0; }
.row { display: flex; gap: 4px; height: 21px; }
.paragraph .row { gap: 3px; }
.combos { display: flex; }
.combo { position: relative; display: flex; align-items: center; background: #fff; border: 1px solid #b3c8e2; }
.combo select { appearance: none; width: 100%; height: 19px; padding: 0 2px; border: 0; background: none; font: inherit; color: #111; }
.combo svg { position: absolute; right: 4px; }
.face { width: 136px; }
.size { width: 43px; border-left: 0; }
.set { display: flex; border: 1px solid #8fb1d8; border-radius: 2px; background: linear-gradient(#d3e2f3 45%, #c0d4eb 50%, #cfe0f2); }
.set button { display: flex; align-items: center; justify-content: center; gap: 3px; }
.set button + button { border-left: 1px solid #b7cde6; }
.set .on { background: linear-gradient(#fbcd92, #f8b45c 45%, #ffdc86); }
.w22 { width: 22px; } .w23 { width: 23px; } .w24 { width: 24px; } .w29 { width: 29px; }
.w33 { width: 33px; } .w34 { width: 33px; } .w36 { width: 36px; }
.set .w29, .set .w33 { gap: 2px; }
.set .serif { font-family: "Liberation Serif", serif; font-size: 15px; line-height: 17px; font-weight: 700; color: #222; }
.set .grow, .set .shrink { gap: 0; align-items: center; }
.set .shrink { font-size: 12px; }
.grow svg, .shrink svg { margin-bottom: 9px; }
.set .strike { font-size: 11px; }
.set .script { font-size: 14px; gap: 0; }
.script sub, .script sup { font-size: 8px; line-height: 9px; color: #2c5aa8; }
.script sub { padding-top: 8px; }
.script sup { padding-bottom: 8px; }
.set .case { font-size: 13px; gap: 1px; }
.set .pilcrow { font-family: "DejaVu Sans", sans-serif; font-size: 14px; line-height: 17px; color: #333; }
.tiny { font: 700 7px "Open Sans", sans-serif; fill: #222; }
.abc { font: 11px "Open Sans", sans-serif; fill: #222; }
.colorA { font: 700 15px "Liberation Serif", serif; fill: #35559c; }
.sortA { font: 700 9px "Open Sans", sans-serif; fill: #2c62b8; }
.sortZ { font: 700 9px "Open Sans", sans-serif; fill: #a03030; }
.rab { font: 700 9px "Open Sans", sans-serif; fill: #333; }
.modA { font: italic 700 15px "Liberation Serif", serif; fill: #2c50a8; }
.chA { font: 700 26px "Liberation Serif", serif; fill: #b765c4; stroke: #8a3c9c; stroke-width: 1px; }
.chB { font: 700 32px "Liberation Serif", serif; fill: #5c93dd; stroke: #2f62ad; stroke-width: 1px; }
.kin { font: 8px "Open Sans", sans-serif; fill: #f39a2d; }

/* style gallery */
.styles .body { padding: 4px 7px 0 3px; gap: 5px; }
.gallery { position: relative; flex: 1; display: flex; height: 60px; border: 1px solid #b6cce6; background: #d5e5f6; }
.cards { flex: 1; display: flex; gap: 8px; padding: 5px 4px; overflow: hidden; }
.card { flex: 0 0 64px; height: 48px; background: #fff; overflow: hidden; }
.card span { display: block; overflow: hidden; white-space: nowrap; }
.demo { height: 28px; margin: 0 3px; font-size: 13px; line-height: 32px; text-align: left; color: #111; }
.name { height: 20px; line-height: 20px; text-align: center; color: #000066; }
.card.picked { border: 0; outline: 3px solid #f0a24a; }
.h1s, .h2s { font: 700 18px/32px "Liberation Serif", serif; color: #365f91; }
.h2s { font-size: 16px; color: #4f81bd; }
.titles { font: 31px/26px "Liberation Serif", serif; color: #17365d; }
.subs { font: italic 16px/32px "Liberation Serif", serif; color: #4f81bd; }
.subtle { font-style: italic; color: #808080; }
.em { font-style: italic; }
.intense { font-style: italic; font-weight: 700; color: #4f81bd; }
.strong { font-weight: 700; }
.pager { width: 14px; display: flex; flex-direction: column; }
.pager button { flex: 1; display: grid; place-items: center; border: 1px solid #a8c3e2; background: #d3e3f5; }
.pager .off { background: #eceef0; border-color: #ccc; }
.change { width: 43px; padding-top: 2px; }
.change span { line-height: 13px; padding-top: 4px; white-space: nowrap; }
.change span svg { display: inline-block; vertical-align: 2px; }

/* context menu over the gallery and document */
.menu { position: absolute; left: 185px; top: 34px; z-index: 5; width: 253px; padding-bottom: 2px; border: 1px solid #868686; border-radius: 2px; background: linear-gradient(90deg, #e9eeee 25px, #c5c5c5 25px 26px, #fafafa 26px); box-shadow: 3px 3px 3px rgba(0,0,0,.35); color: #000066; }
.menu button { display: flex; align-items: center; height: 22px; width: 100%; white-space: nowrap; }
.menu button span { flex: 1; text-align: left; }
.menu button > span:first-child { padding-left: 34px; }
.menu button svg { margin: 0 12px 0 5px; }
.menu hr { margin: 0 1px 0 33px; border: 0; height: 2px; border-top: 1px solid #c5c5c5; }
.menu u { text-underline-offset: 2px; }

/* document */
.workspace { position: relative; flex: 1; min-height: 0; display: flex; background: linear-gradient(#a6c5ec, #91b1de 13%, #82a4d4 25%, #6d91c2 50%, #5479af 73%, #6792d0); }
.swoosh { position: absolute; left: 0; top: 0; }
.canvas { position: relative; flex: 1; display: flex; flex-direction: column; align-items: center; gap: 15px; padding: 7px 0 0 3px; overflow: hidden; border-bottom: 1px solid #5e82b4; }
.page { width: 794px; max-width: 100%; flex: none; background: #fff; box-shadow: 0 0 0 1px #555d6b, 3px 3px 7px rgba(20,35,60,.8); }
.first { height: 164px; clip-path: inset(0 -14px -12px -6px); }
.second { flex: 1; padding: 197px 96px 0; }
.chapter { width: 118px; padding: 20px 0 3px; background: #a9cbf0; font: 700 19px/21px "Liberation Serif", serif; color: #2a68a8; }
.para { display: flex; flex-direction: column; justify-content: space-between; height: 220px; margin-top: 63px; font: 16px/18px "Liberation Serif", serif; color: #000; }
.para p { text-align-last: justify; white-space: nowrap; }
.para .indent { padding-left: 48px; }
.para .last { text-align-last: left; }
.sp { text-decoration: underline wavy #d03030 1px; text-underline-offset: 1px; text-decoration-skip-ink: none; }
.arrow { position: absolute; left: 608px; top: -3px; z-index: 3; }
.scroll { position: relative; width: 17px; display: flex; flex-direction: column; border-left: 1px solid #a9c6ee; background: #a5c3ea; }
.scroll button { display: grid; place-items: center; width: 100%; }
.ruler { height: 26px; padding-top: 2px; }
.track { flex: 1; display: flex; flex-direction: column; background: linear-gradient(90deg, #6c8dbd, #809ecb); }
.track > button { height: 18px; }
.lane { flex: 1; display: flex; flex-direction: column; padding-top: 380px; }
.thumb { height: 39px; display: grid; place-items: center; border: 1px solid #475d83; background: linear-gradient(90deg, #f3f6fb, #bccbe2 60%, #dfe8f5); }
.browse { display: flex; flex-direction: column; height: 51px; background: #b9d2f5; }
.browse button { flex: 1; }

/* status bar */
.status { display: flex; height: 22px; border-top: 1px solid #dfecfd; border-bottom: 1px solid #3f5a80; background: linear-gradient(#e2eefd, #c5dbf8 45%, #adcaf2 50%, #cfe1fa); color: #15286b; font-size: 11px; line-height: 20px; }
.cell { display: flex; align-items: center; border-right: 1px solid #93b1db; }
.pg { width: 77px; padding-left: 8px; }
.wd { width: 86px; padding-left: 9px; }
.lang { width: 181px; padding-left: 8px; gap: 16px; white-space: nowrap; }
.right { margin-left: auto; display: flex; align-items: center; padding: 0 5px; border-left: 1px solid #eef5ff; background: linear-gradient(#b5cff3, #8fb2e3 50%, #7ea3d9 55%, #9fbfec); }
.views { display: flex; height: 18px; border: 1px solid #7392c0; border-radius: 2px; background: #d8e5f7; }
.views button { width: 18px; display: grid; place-items: center; border-right: 1px solid #9db9e0; }
.views .on { background: #fbcf7e; }
.pct { width: 44px; text-align: center; }
.slider { appearance: none; width: 101px; height: 16px; margin: 0; background: linear-gradient(transparent 7px, #4f6d9c 7px 8px, #dbe8fa 8px 9px, transparent 9px); }
.slider::-webkit-slider-thumb { appearance: none; width: 9px; height: 13px; border: 1px solid #4c5f80; border-radius: 1px 1px 5px 5px; background: #e7effa; }

/* taskbar */
.taskbar { display: flex; align-items: center; height: 40px; padding-left: 7px; background: linear-gradient(90deg, #8295a9, #8a9fb5 4%, #a9c6e1 8%, #b4cfe8 20%, #abcbe6 50%, #b3cee8 83%, #8ba0b6 88%, #93a6ba); box-shadow: inset 0 1px #dce9f5; }
.start { width: 51px; display: grid; padding-left: 2px; }
.app { width: 62px; height: 39px; display: grid; place-items: center; }
.box { width: 59px; margin: 0 1px 0 2px; border: 1px solid #5d7087; border-radius: 3px; background: linear-gradient(135deg, #dbe8f4, #b9cfe4); box-shadow: inset 0 0 0 1px rgba(255,255,255,.6); }
.pile { display: flex; }
.pile .word { width: 52px; margin-right: 0; background: linear-gradient(135deg, #fff, #dce8f3); }
.pile i { width: 4px; height: 39px; border: 1px solid #5d7087; border-left: 0; border-radius: 0 3px 3px 0; background: #c8d9ea; }
.tray { margin: 0 6px 0 auto; display: flex; align-items: center; gap: 9px; }
.tray svg:nth-child(2) { margin: 0 3px 0 4px; }
.clock { width: 72px; text-align: center; font-size: 12px; line-height: 17px; color: #fff; }
.peek { width: 15px; height: 39px; border: 1px solid #65788c; background: linear-gradient(135deg, #c9d5e0, #8396a8); }
```
